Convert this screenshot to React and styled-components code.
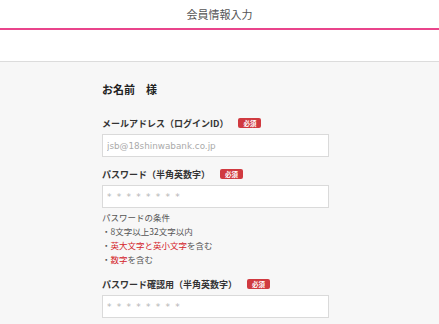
import React from 'react';
import styled, { createGlobalStyle } from 'styled-components';

const GlobalStyle = createGlobalStyle`
  html, body {
    margin: 0;
    padding: 0;
    background: #f7f7f7;
    font-family: "Noto Sans CJK JP", "Noto Sans", sans-serif;
  }
`;

const Page = styled.div`
  min-height: 324px;
  background: #f7f7f7;
`;

const Header = styled.header`
  height: 28px;
  background: #fff;
  border-bottom: 2px solid #e9448b;
  display: flex;
  align-items: center;
  justify-content: center;
  font-size: 11px;
  color: #555;
`;

const SubBar = styled.div`
  height: 31px;
  background: #fff;
  border-bottom: 1px solid #dcdcdc;
`;

const Form = styled.form`
  width: 227px;
  padding: 20px 0 0 102px;
  display: flex;
  flex-direction: column;
`;

const Name = styled.div`
  font-size: 11px;
  font-weight: bold;
  line-height: 14px;
  color: #222;
  margin-bottom: 20px;
`;

const LabelRow = styled.div`
  display: flex;
  align-items: center;
  height: 14px;
  margin-top: ${(p) => p.$top || 0}px;
  margin-bottom: 4px;
`;

const Label = styled.label`
  font-size: 9px;
  font-weight: bold;
  color: #333;
`;

const Badge = styled.span`
  margin-left: 10px;
  width: 23px;
  height: 10px;
  border-radius: 2px;
  background: #d03a40;
  color: #fff;
  font-size: 6.5px;
  font-weight: bold;
  display: flex;
  align-items: center;
  justify-content: center;
  line-height: 1;
`;

const Input = styled.input`
  box-sizing: border-box;
  width: 227px;
  height: 23px;
  border: 1px solid #dadada;
  background: #fff;
  padding: 0 4px;
  font-family: "DejaVu Sans", "Noto Sans", sans-serif;
  font-size: ${(p) => (p.$mask ? 9 : 8.8)}px;
  letter-spacing: ${(p) => (p.$mask ? 1.2 : 0)}px;
  outline: none;
  &::placeholder {
    color: ${(p) => (p.$mask ? '#b5b5b5' : '#aaa')};
  }
`;

const Rules = styled.ul`
  list-style: none;
  margin: 2px 0 0;
  padding: 0;
  font-size: 8.5px;
  line-height: 14px;
  color: #555;
`;

const Rule = styled.li``;

const Red = styled.span`
  color: #d4242b;
`;

function Field({ label, top, placeholder, mask, type }) {
  return (
    <>
      <LabelRow $top={top}>
        <Label>{label}</Label>
        <Badge>必須</Badge>
      </LabelRow>
      <Input type={type || 'text'} placeholder={placeholder} $mask={mask} />
    </>
  );
}

export default function App() {
  return (
    <Page>
      <GlobalStyle />
      <Header>会員情報入力</Header>
      <SubBar />
      <Form>
        <Name>お名前　様</Name>
        <Field label="メールアドレス（ログインID）" placeholder="jsb@18shinwabank.co.jp" />
        <Field label="パスワード（半角英数字）" top={10} placeholder="* * * * * * * *" mask />
        <Rules>
          <Rule>パスワードの条件</Rule>
          <Rule>・8文字以上32文字以内</Rule>
          <Rule>・<Red>英大文字と英小文字</Red>を含む</Rule>
          <Rule>・<Red>数字</Red>を含む</Rule>
        </Rules>
        <Field label="パスワード確認用（半角英数字）" top={11} placeholder="* * * * * * * *" mask />
      </Form>
    </Page>
  );
}
